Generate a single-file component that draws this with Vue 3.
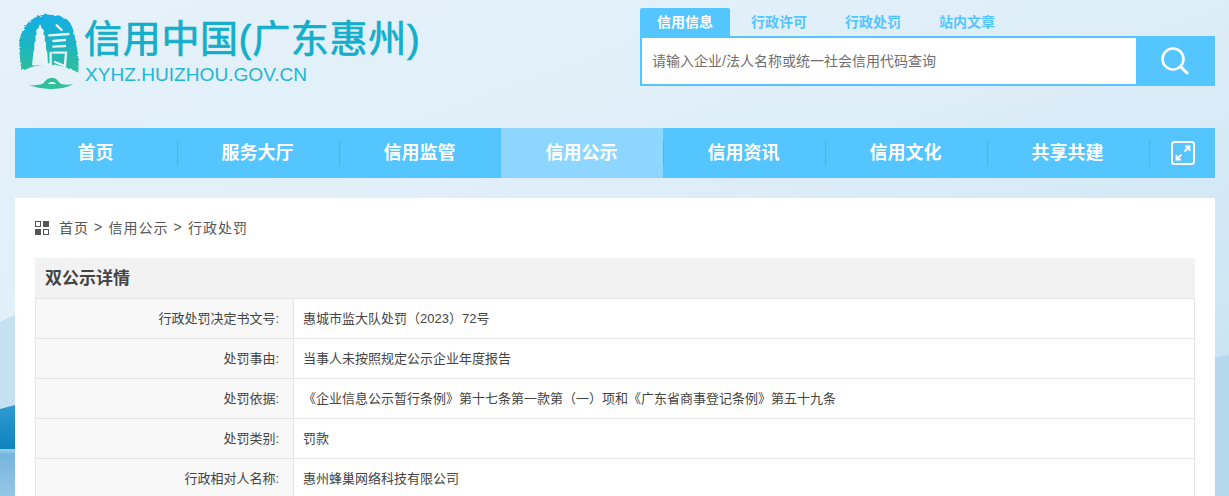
<script setup>
const tabs = ["信用信息", "行政许可", "行政处罚", "站内文章"];
const navs = ["首页", "服务大厅", "信用监管", "信用公示", "信用资讯", "信用文化", "共享共建"];
const rows = [
  ["行政处罚决定书文号:", "惠城市监大队处罚（2023）72号"],
  ["处罚事由:", "当事人未按照规定公示企业年度报告"],
  ["处罚依据:", "《企业信息公示暂行条例》第十七条第一款第（一）项和《广东省商事登记条例》第五十九条"],
  ["处罚类别:", "罚款"],
  ["行政相对人名称:", "惠州蜂巢网络科技有限公司"],
];
</script>

<template>
  <div class="page">
    <div class="scenery" aria-hidden="true">
      <svg width="1229" height="496" viewBox="0 0 1229 496">
        <defs>
          <linearGradient id="sea" x1="0" y1="0" x2="0" y2="1">
            <stop offset="0" stop-color="#2f9ad2" />
            <stop offset="1" stop-color="#0f83bd" />
          </linearGradient>
          <linearGradient id="water" x1="0" y1="0" x2="0" y2="1">
            <stop offset="0" stop-color="#a3cfe9" />
            <stop offset="0.12" stop-color="#75b6de" />
            <stop offset="1" stop-color="#95c7e5" />
          </linearGradient>
        </defs>
        <path d="M0 322L15 315V410H0Z" fill="#c4e0f1" />
        <path d="M0 409L15 405V449H0Z" fill="url(#sea)" />
        <rect x="0" y="449" width="15" height="47" fill="url(#water)" />
        <path d="M1215 358L1229 355V496H1215Z" fill="#b5d8ee" />
      </svg>
    </div>

    <header class="top">
      <a class="logo">
        <svg class="mark" width="66" height="82" viewBox="21 15 198 246">
          <defs>
            <linearGradient id="mark" x1="0" y1="0" x2="0" y2="1">
              <stop offset="0" stop-color="#12aee6" />
              <stop offset="0.55" stop-color="#1fb5c0" />
              <stop offset="1" stop-color="#2fc09a" />
            </linearGradient>
            <filter id="rough" x="-10%" y="-10%" width="120%" height="120%">
              <feTurbulence type="fractalNoise" baseFrequency="0.09" numOctaves="2" seed="4" />
              <feDisplacementMap in="SourceGraphic" scale="9" />
            </filter>
          </defs>
          <path filter="url(#rough)" d="M85 30C105 24 145 24 170 40C185 52 192 72 198 110C204 140 208 170 205 200C190 192 150 176 120 175C90 174 60 184 35 195C31 170 27 140 28 110C30 80 50 42 85 30Z" fill="url(#mark)" />
          <path d="M90 54L96 68L102 72L100 84L105 90L104 104L108 110L108 130L112 140L114 178L66 178L70 140L73 130L73 110L77 104L76 90L80 84L78 72L84 68Z" fill="#e8f3fa" />
          <path d="M140 58L155 72M118 88L175 84M130 105L165 102M130 122L165 120M122 140V180M130 140H168L165 178M135 168L165 180" stroke="#e8f3fa" stroke-width="7" fill="none" stroke-linecap="round" />
          <path d="M58 238C72 238 90 238 100 232C106 222 115 215 126 215C137 215 145 224 150 232C160 238 175 236 190 235C170 244 150 250 120 249C96 248 74 244 58 238Z" fill="#2fc09a" />
          <path d="M114 234C118 226 134 226 138 234Z" fill="#e8f3fa" />
        </svg>
        <div class="logo-text">
          <div class="logo-cn">信用中国(广东惠州)</div>
          <div class="logo-en">XYHZ.HUIZHOU.GOV.CN</div>
        </div>
      </a>

      <div class="search">
        <div class="tabs">
          <span v-for="(t, i) in tabs" :key="t" class="tab" :class="{ on: i === 0 }">{{ t }}</span>
        </div>
        <div class="box">
          <div class="input">请输入企业/法人名称或统一社会信用代码查询</div>
          <div class="go">
            <svg width="28" height="28" viewBox="0 0 28 28" fill="none" stroke="#fff">
              <circle cx="12" cy="12" r="10.5" stroke-width="2.6" />
              <path d="M19.5 19.5L26 26" stroke-width="3" stroke-linecap="round" />
            </svg>
          </div>
        </div>
      </div>
    </header>

    <nav class="nav">
      <a v-for="(n, i) in navs" :key="n" class="nav-item" :class="{ on: i === 3 }">{{ n }}</a>
      <a class="nav-more">
        <svg width="24" height="24" viewBox="0 0 24 24" fill="none" stroke="#fff">
          <rect x="1" y="1" width="22" height="22" rx="2.5" stroke-width="2" />
          <path d="M14 5.5H18.5V10M18 6L13.5 10.5M5.5 14V18.5H10M6 18L10.5 13.5" stroke-width="1.8" />
        </svg>
      </a>
    </nav>

    <main class="card">
      <div class="crumb">
        <span class="crumb-icon"><i></i><i class="solid"></i><i class="solid"></i><i></i></span>
        <span>首页</span><span class="sep">&gt;</span><span>信用公示</span><span class="sep">&gt;</span><span>行政处罚</span>
      </div>
      <h2 class="title">双公示详情</h2>
      <div class="table">
        <div v-for="r in rows" :key="r[0]" class="row">
          <div class="label">{{ r[0] }}</div>
          <div class="value">{{ r[1] }}</div>
        </div>
      </div>
    </main>
  </div>
</template>

<style>
html,
body {
  margin: 0;
  height: 496px;
  overflow: hidden;
}
</style>

<style scoped>
.page {
  position: relative;
  width: 1229px;
  height: 496px;
  overflow: hidden;
  background: linear-gradient(160deg, #e6f2fa 0%, #deeef8 45%, #c4e1f3 100%);
  font-family: "Liberation Sans", "Noto Sans CJK SC", sans-serif;
  text-spacing-trim: space-all;
}

.scenery {
  position: absolute;
  left: 0;
  top: 0;
}

.top {
  position: relative;
  height: 128px;
  display: flex;
  justify-content: space-between;
  padding: 8px 14px 0 17px;
  box-sizing: border-box;
}

.logo {
  display: flex;
  align-items: flex-start;
  gap: 1px;
}

.mark {
  margin-top: 3px;
}

.logo-text {
  padding-top: 7px;
}

.logo-cn {
  font-size: 38px;
  line-height: 48px;
  color: #12aecb;
  white-space: nowrap;
  letter-spacing: 0.7px;
  -webkit-text-stroke: 0.7px #12aecb;
}

.logo-en {
  font-size: 19.1px;
  line-height: 24px;
  margin-left: 1px;
  color: #22b5d2;
  white-space: nowrap;
}

.search {
  width: 575px;
}

.tabs {
  display: flex;
  gap: 4px;
  height: 28px;
}

.tab {
  padding: 0 17px;
  font-size: 14px;
  font-weight: 700;
  line-height: 28px;
  color: #54c5ff;
}

.tab.on {
  background: #54c5ff;
  color: #fff;
  border-radius: 2px 2px 0 0;
}

.box {
  display: flex;
  height: 50px;
  border: 2px solid #54c5ff;
  box-sizing: border-box;
  background: #fff;
}

.input {
  flex: 1;
  padding-left: 10px;
  font-size: 14px;
  line-height: 46px;
  color: #6f6f6f;
}

.go {
  width: 77px;
  background: #54c5ff;
  display: flex;
  align-items: center;
  justify-content: center;
}

.nav {
  position: relative;
  display: flex;
  width: 1200px;
  height: 50px;
  margin-left: 15px;
  background: #54c5ff;
}

.nav-item {
  width: 162px;
  padding-right: 1px;
  box-sizing: border-box;
  font-size: 18px;
  font-weight: 700;
  line-height: 50px;
  text-align: center;
  color: #fff;
  position: relative;
}

.nav-item::after {
  content: "";
  position: absolute;
  right: -1px;
  top: 13px;
  width: 1px;
  height: 25px;
  background: #46b5ea;
}

.nav-item.on {
  background: #8ed6fd;
}

.nav-more {
  flex: 1;
  padding-left: 2px;
  display: flex;
  align-items: center;
  justify-content: center;
}

.card {
  position: relative;
  width: 1200px;
  height: 320px;
  box-sizing: border-box;
  margin: 20px 0 0 15px;
  padding: 0 20px;
  background: #fff;
}

.crumb {
  display: flex;
  align-items: center;
  gap: 5px;
  height: 60px;
  padding-bottom: 2px;
  box-sizing: border-box;
  font-size: 14px;
  letter-spacing: 1px;
  color: #555;
}

.sep {
  letter-spacing: 0;
  margin-right: 1.3px;
}

.crumb-icon {
  display: grid;
  grid-template-columns: 6px 6px;
  grid-template-rows: 6px 6px;
  gap: 2px;
  margin: 2px 5px 0 0;
}

.crumb-icon i {
  box-sizing: border-box;
  border: 1px solid #555;
}

.crumb-icon i.solid {
  background: #555;
}

.title {
  margin: 0;
  height: 40px;
  padding-left: 10px;
  font-size: 17px;
  font-weight: 700;
  line-height: 41px;
  color: #444;
  background: #f2f2f2;
}

.table {
  border-left: 1px solid #e5e5e5;
  border-right: 1px solid #e5e5e5;
}

.row {
  display: flex;
  height: 40px;
  box-sizing: border-box;
  border-top: 1px solid #e5e5e5;
  font-size: 13px;
  line-height: 39px;
  color: #444;
}

.label {
  width: 258px;
  box-sizing: border-box;
  padding-right: 14px;
  text-align: right;
  background: #f8f8f8;
  border-right: 1px solid #e5e5e5;
}

.value {
  flex: 1;
  padding-left: 9px;
  white-space: nowrap;
}
</style>
